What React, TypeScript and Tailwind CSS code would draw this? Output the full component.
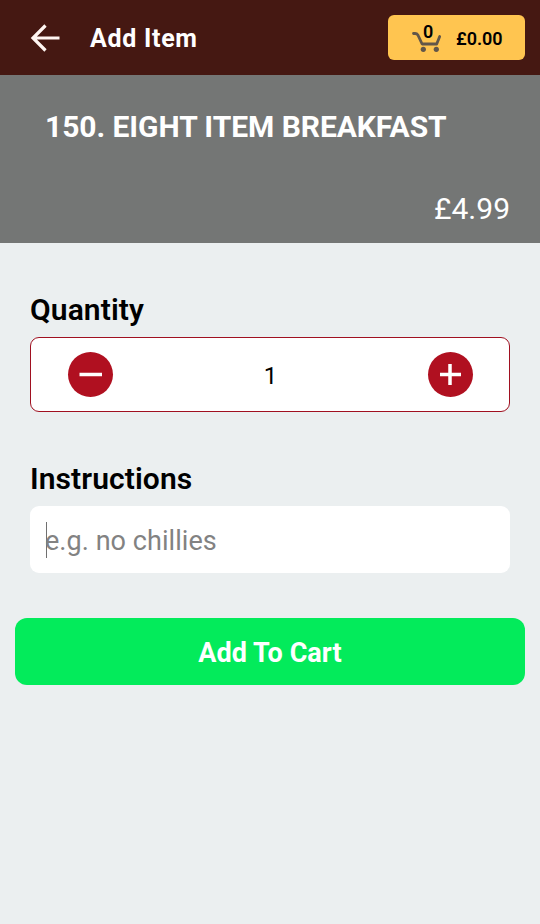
import { useState } from 'react';

const PRICE = 4.99;

const BackArrow = () => (
  <svg width="32" height="30" viewBox="0 0 32 30" fill="none" stroke="#fff6f2" strokeWidth="3.2">
    <path d="M30.5 15H4M16.5 2.5L4 15l12.5 12.5" />
  </svg>
);

const CartIcon = () => (
  <svg width="30" height="22" viewBox="0 0 30 22" fill="none" className="text-[#625649]">
    <path
      d="M1.5 3.5h1.6q1.8 0 2.8 1.5l4.2 9h14.6l3-7.5"
      stroke="currentColor"
      strokeWidth="2.8"
      strokeLinecap="round"
      strokeLinejoin="round"
    />
    <circle cx="11.3" cy="19.3" r="2.6" fill="currentColor" />
    <circle cx="24.3" cy="19.3" r="2.6" fill="currentColor" />
  </svg>
);

interface RoundButtonProps {
  label: string;
  path: string;
  onClick: () => void;
}

const RoundButton = ({ label, path, onClick }: RoundButtonProps) => (
  <button aria-label={label} onClick={onClick} className="size-[45px] rounded-full bg-[#b01020]">
    <svg width="45" height="45" viewBox="0 0 45 45" fill="none" stroke="#ffffff" strokeWidth="3.5">
      <path d={path} />
    </svg>
  </button>
);

const App = () => {
  const [quantity, setQuantity] = useState(1);

  return (
    <div className="min-h-screen bg-[#ebeff0] font-['Roboto',sans-serif] text-black">
      <header className="flex h-[75px] items-center bg-[#451812] pr-[15px] pl-[29px]">
        <button aria-label="Back">
          <BackArrow />
        </button>
        <h1 className="ml-[29px] pt-[3px] text-[25px] leading-8 font-bold tracking-[0.7px] text-white">Add Item</h1>
        <button className="ml-auto flex h-[45px] w-[137px] items-center rounded-md bg-[#ffc550] pl-6">
          <span className="relative mt-1.5 block h-[22px] w-[30px]">
            <CartIcon />
            <span className="absolute -top-[8px] left-[11px] text-[18px] leading-5 font-semibold">0</span>
          </span>
          <span className="ml-[14px] pt-[3px] text-[18px] leading-6 font-semibold">£0.00</span>
        </button>
      </header>

      <section className="flex h-[168px] flex-col justify-between bg-[#747675] pt-[34px] pr-[30px] pb-4 pl-[45px] text-white">
        <h2 className="text-[30px] leading-9 font-bold tracking-[-0.05px] whitespace-nowrap">150. EIGHT ITEM BREAKFAST</h2>
        <p className="text-right text-[30px] leading-9">£{PRICE.toFixed(2)}</p>
      </section>

      <main className="px-[15px] pt-[49px]">
        <div className="px-[15px]">
          <h3 className="text-[30px] leading-9 font-semibold tracking-[0.1px]">Quantity</h3>
          <div className="mt-[9px] flex h-[75px] items-center justify-between rounded-[9px] border border-[#a01020] bg-white pr-9 pl-[37px]">
            <RoundButton label="Decrease" path="M11.5 22.5H34" onClick={() => setQuantity(Math.max(1, quantity - 1))} />
            <span className="pt-[2px] text-[24px] leading-8">{quantity}</span>
            <RoundButton label="Increase" path="M12 22.5h21M22 12v21" onClick={() => setQuantity(quantity + 1)} />
          </div>

          <h3 className="mt-[49px] text-[30px] leading-9 font-semibold tracking-[0.1px]">Instructions</h3>
          <div className="mt-[9px] flex h-[67px] items-center rounded-[9px] bg-white px-4">
            <span className="h-9 w-px bg-[#707070]" />
            <span className="-ml-[2px] pt-[2px] text-[27px] leading-9 tracking-[0.05px] text-[#828282]">e.g. no chillies</span>
          </div>
        </div>

        <button className="mt-[45px] h-[67px] w-full rounded-xl bg-[#03eb5b] pt-[2px] text-[27px] leading-9 font-bold tracking-[0.05px] text-white">
          Add To Cart
        </button>
      </main>
    </div>
  );
};

export default App;
